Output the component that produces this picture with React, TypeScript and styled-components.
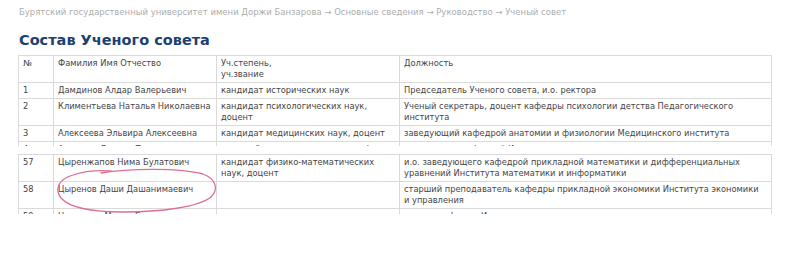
import React from "react";
import styled, { createGlobalStyle } from "styled-components";

const GlobalStyle = createGlobalStyle`
  body {
    margin: 0;
    background: #fff;
    font-family: "DejaVu Sans", Verdana, sans-serif;
  }
`;

type Row = {
  num: string;
  name: string;
  degree: React.ReactNode;
  post: string;
};

const topRows: Row[] = [
  {
    num: "1",
    name: "Дамдинов Алдар Валерьевич",
    degree: "кандидат исторических наук",
    post: "Председатель Ученого совета, и.о. ректора",
  },
  {
    num: "2",
    name: "Климентьева Наталья Николаевна",
    degree: "кандидат психологических наук, доцент",
    post: "Ученый секретарь, доцент кафедры психологии детства Педагогического института",
  },
  {
    num: "3",
    name: "Алексеева Эльвира Алексеевна",
    degree: "кандидат медицинских наук, доцент",
    post: "заведующий кафедрой анатомии и физиологии Медицинского института",
  },
  {
    num: "4",
    name: "Аюшеева Галина Петровна",
    degree: "доктор биологических наук, профессор",
    post: "заведующая кафедрой Института",
  },
];

const bottomRows: Row[] = [
  {
    num: "57",
    name: "Цыренжапов Нима Булатович",
    degree: "кандидат физико-математических наук, доцент",
    post: "и.о. заведующего кафедрой прикладной математики и дифференциальных уравнений Института математики и информатики",
  },
  {
    num: "58",
    name: "Цыренов Даши Дашанимаевич",
    degree: "",
    // keep "и управления" together on the second line
    post: "старший преподаватель кафедры прикладной экономики Института экономики и\u00a0управления",
  },
  {
    num: "59",
    name: "Цыренова Мария Бадмаевна",
    degree: "кандидат педагогических наук",
    post: "доцент кафедры Института",
  },
];

function Columns() {
  return (
    <colgroup>
      <col style={{ width: 35 }} />
      <col style={{ width: 163 }} />
      <col style={{ width: 183 }} />
      <col />
    </colgroup>
  );
}

function Rows({ rows }: { rows: Row[] }) {
  return (
    <>
      {rows.map((r) => (
        <tr key={r.num}>
          <Cell>{r.num}</Cell>
          <Cell>{r.name}</Cell>
          <Cell>{r.degree}</Cell>
          <Cell>{r.post}</Cell>
        </tr>
      ))}
    </>
  );
}

export default function App() {
  return (
    <>
      <GlobalStyle />
      <Page>
        <Breadcrumbs>
          Бурятский государственный университет имени Доржи Банзарова → Основные сведения →
          Руководство → Ученый совет
        </Breadcrumbs>
        <Title>Состав Ученого совета</Title>
        <Fragment $height={91} $gap={5}>
          <Table>
            <Columns />
            <tbody>
              <tr>
                <Cell>№</Cell>
                <Cell>Фамилия Имя Отчество</Cell>
                <Cell>
                  Уч.степень,
                  <br />
                  уч.звание
                </Cell>
                <Cell>Должность</Cell>
              </tr>
              <Rows rows={topRows} />
            </tbody>
          </Table>
        </Fragment>
        <Fragment $height={60} $gap={8}>
          <Table>
            <Columns />
            <tbody>
              <Rows rows={bottomRows} />
            </tbody>
          </Table>
          <Mark viewBox="0 0 166 47" width="166" height="47">
            <path
              d="M48 6 C78 1 128 1 150 7 C163 12 166 22 158 30 C146 40 108 45 70 45 C38 45 16 40 8 31 C1 22 6 12 20 8 C32 4 44 3 58 4"
              fill="none"
              stroke="#e0708f"
              strokeWidth="1.3"
              strokeLinecap="round"
            />
          </Mark>
        </Fragment>
      </Page>
    </>
  );
}

const Page = styled.div`
  padding: 7px 0 0 18px;
  width: 782px;
`;

const Breadcrumbs = styled.div`
  font-size: 8.5px;
  line-height: 11px;
  color: #adadad;
  padding-left: 1px;
`;

const Title = styled.h1`
  margin: 12px 0 0 1px;
  font-size: 14.5px;
  line-height: 20px;
  font-weight: bold;
  color: #1d3f72;
`;

const Fragment = styled.div<{ $height: number; $gap: number }>`
  position: relative;
  height: ${(p) => p.$height}px;
  overflow: hidden;
  margin-top: ${(p) => p.$gap}px;
`;

const Table = styled.table`
  width: 754px;
  table-layout: fixed;
  border-collapse: collapse;
  font-size: 8.3px;
  line-height: 11px;
  color: #454545;
`;

const Cell = styled.td`
  border: 1px solid #dadada;
  padding: 2px 3px 2px 4px;
  vertical-align: top;
`;

const Mark = styled.svg`
  position: absolute;
  left: 35px;
  top: 13px;
  pointer-events: none;
`;
